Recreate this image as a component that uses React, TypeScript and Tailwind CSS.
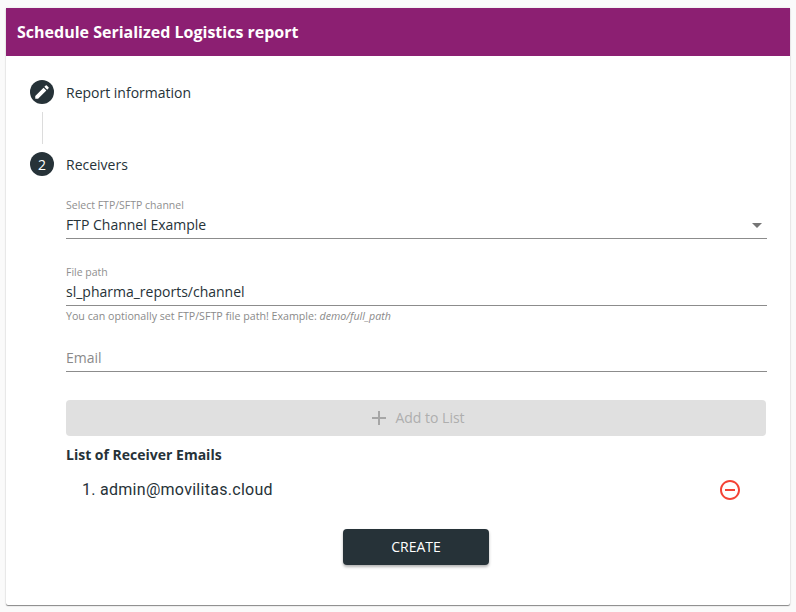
import React from "react";

const open = "font-['Open_Sans',sans-serif]";

export default function App() {
  return (
    <div className={`h-[612px] w-[796px] overflow-hidden bg-[#fafafa] px-[6px] pt-[8px] ${open}`}>
      <div className="h-[597px] w-[784px] rounded-b-[2px] bg-white shadow-[0_1px_1px_rgba(0,0,0,0.45),0_0_3px_rgba(0,0,0,0.08)]">
        <div className="flex h-[48px] items-center bg-[#8c1f72] px-[11px] text-[16px] font-bold text-white">
          Schedule Serialized Logistics report
        </div>
        <div className="pl-[24px] pr-[23px] pt-[24px]">
          <div className="flex h-[24px] items-center">
            <div className="flex h-[24px] w-[24px] items-center justify-center rounded-full bg-[#263238]">
              <svg width="18" height="18" viewBox="0 0 24 24" fill="#fff">
                <path d="M3 17.25V21h3.75L17.81 9.94l-3.75-3.75L3 17.25zM20.71 7.04a1 1 0 0 0 0-1.41l-2.34-2.34a1 1 0 0 0-1.41 0l-1.83 1.83 3.75 3.75 1.83-1.83z" />
              </svg>
            </div>
            <span className="ml-[12px] pt-[2px] text-[14px] leading-[24px] text-[#263238]">Report information</span>
          </div>
          <div className="ml-[12px] mt-[8px] h-[32px] w-px bg-[#dcdcdc]" />
          <div className="mt-[8px] flex h-[24px] items-center">
            <div className="flex h-[24px] w-[24px] items-center justify-center rounded-full bg-[#263238] text-[14px] text-white">
              2
            </div>
            <span className="ml-[12px] pt-[2px] text-[14px] leading-[24px] text-[#263238]">Receivers</span>
          </div>

          <div className="ml-[36px] w-[701px]">
            <div className="mt-[22px] h-[41px] border-b border-[#8c8c8c]">
              <div className="text-[10.5px] leading-[14px] text-[#8f8f8f]">Select FTP/SFTP channel</div>
              <div className="flex items-center justify-between">
                <span className="text-[14px] leading-[25px] text-[#263238]">FTP Channel Example</span>
                <span className="mr-[5px] mt-[1px] h-0 w-0 border-x-[5px] border-t-[5px] border-x-transparent border-t-[#757575]" />
              </div>
            </div>

            <div className="mt-[26px] h-[41px] border-b border-[#8c8c8c]">
              <div className="text-[10.5px] leading-[14px] text-[#8f8f8f]">File path</div>
              <div className="text-[14px] leading-[25px] text-[#263238]">sl_pharma_reports/channel</div>
            </div>
            <div className="mt-[3px] text-[10.66px] leading-[14px] text-[#8a8a8a]">
              You can optionally set FTP/SFTP file path! Example: <em>demo/full_path</em>
            </div>

            <div className="mt-[17px] flex h-[32px] items-end border-b border-[#8c8c8c] pb-[2px] text-[14px] leading-[23px] text-[#8a8a8a]">
              Email
            </div>

            <div className="mr-[1px] mt-[28px] flex h-[36px] items-center justify-center rounded-[4px] bg-[#e0e0e0] text-[14px] text-[#aeaeae]">
              <svg width="24" height="24" viewBox="0 0 24 24" fill="#a6a6a6" className="mr-[4px]">
                <path d="M19 13h-6v6h-2v-6H5v-2h6V5h2v6h6v2z" />
              </svg>
              <span className="pb-[2px]">Add to List</span>
            </div>

            <div className="mt-[9px] text-[14px] font-bold leading-[19px] text-[#263238]">List of Receiver Emails</div>

            <div className="mt-[6px] flex h-[40px] items-center justify-between">
              <span className="pl-[16px] font-['Roboto',sans-serif] text-[16px] leading-[24px] tracking-[0.28px] text-[#263238]">
                1. admin@movilitas.cloud
              </span>
              <svg width="24" height="24" viewBox="0 0 24 24" fill="#f44336" className="mr-[25px]">
                <path d="M7 11v2h10v-2H7zm5-9C6.48 2 2 6.48 2 12s4.48 10 10 10 10-4.48 10-10S17.52 2 12 2zm0 18c-4.41 0-8-3.59-8-8s3.59-8 8-8 8 3.59 8 8-3.59 8-8 8z" />
              </svg>
            </div>

            <div className="mr-[1px] mt-[19px] flex justify-center">
              <div className="flex h-[36px] w-[146px] items-center justify-center rounded-[4px] bg-[#263238] pb-[2px] text-[14px] text-white shadow-[0_2px_3px_rgba(0,0,0,0.3)]">
                CREATE
              </div>
            </div>
          </div>
        </div>
      </div>
    </div>
  );
}
